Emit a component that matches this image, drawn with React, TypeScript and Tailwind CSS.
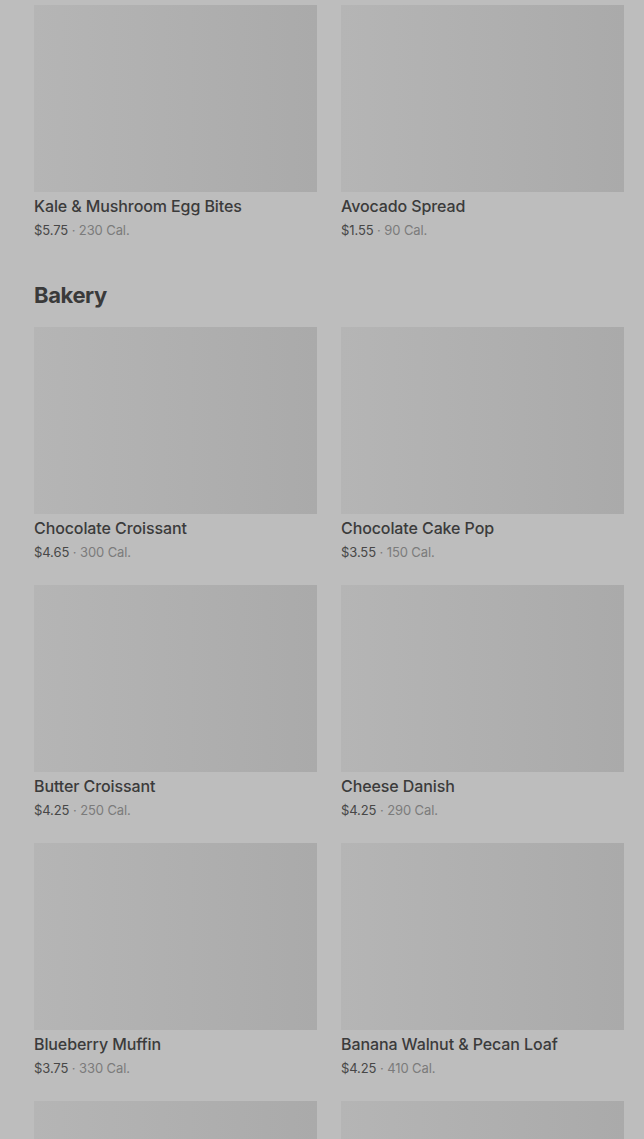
type Item = { name: string; price: string; cal: string }

const topItems: Item[] = [
  { name: "Kale & Mushroom Egg Bites", price: "$5.75", cal: "230 Cal." },
  { name: "Avocado Spread", price: "$1.55", cal: "90 Cal." },
]

const bakery: Item[] = [
  { name: "Chocolate Croissant", price: "$4.65", cal: "300 Cal." },
  { name: "Chocolate Cake Pop", price: "$3.55", cal: "150 Cal." },
  { name: "Butter Croissant", price: "$4.25", cal: "250 Cal." },
  { name: "Cheese Danish", price: "$4.25", cal: "290 Cal." },
  { name: "Blueberry Muffin", price: "$3.75", cal: "330 Cal." },
  { name: "Banana Walnut & Pecan Loaf", price: "$4.25", cal: "410 Cal." },
  { name: "", price: "", cal: "" },
  { name: "", price: "", cal: "" },
]

function ItemCard({ item }: { item: Item }) {
  return (
    <div className="flex flex-col">
      <div className="h-[187px] w-full bg-gradient-to-r from-[#b5b5b5] to-[#aaaaaa]" />
      {item.name && (
        <>
          <div className="mt-[4px] text-[16px] leading-5 font-medium text-[#3b3b3b] tracking-[-0.1px]">{item.name}</div>
          <div className="mt-[5px] text-[13px] leading-[18px] tracking-[-0.1px]">
            <span className="text-[#474747]">{item.price}</span>
            <span className="text-[#7b7b7b]"> · {item.cal}</span>
          </div>
        </>
      )}
    </div>
  )
}

export default function App() {
  return (
    <div className="h-[1139px] overflow-hidden bg-[#bdbdbd] pl-[34px] pr-[20px] pt-[5px] font-['Inter','Roboto',sans-serif]">
      <div className="grid grid-cols-2 gap-x-6 gap-y-[24px]">
        {topItems.map((it) => (
          <ItemCard key={it.name} item={it} />
        ))}
      </div>
      <h2 className="mt-[42px] mb-[18px] text-[22px] leading-7 font-bold tracking-[-0.4px] text-[#3a3a3a]">Bakery</h2>
      <div className="grid grid-cols-2 gap-x-6 gap-y-[24px]">
        {bakery.map((it, i) => (
          <ItemCard key={i} item={it} />
        ))}
      </div>
    </div>
  )
}
